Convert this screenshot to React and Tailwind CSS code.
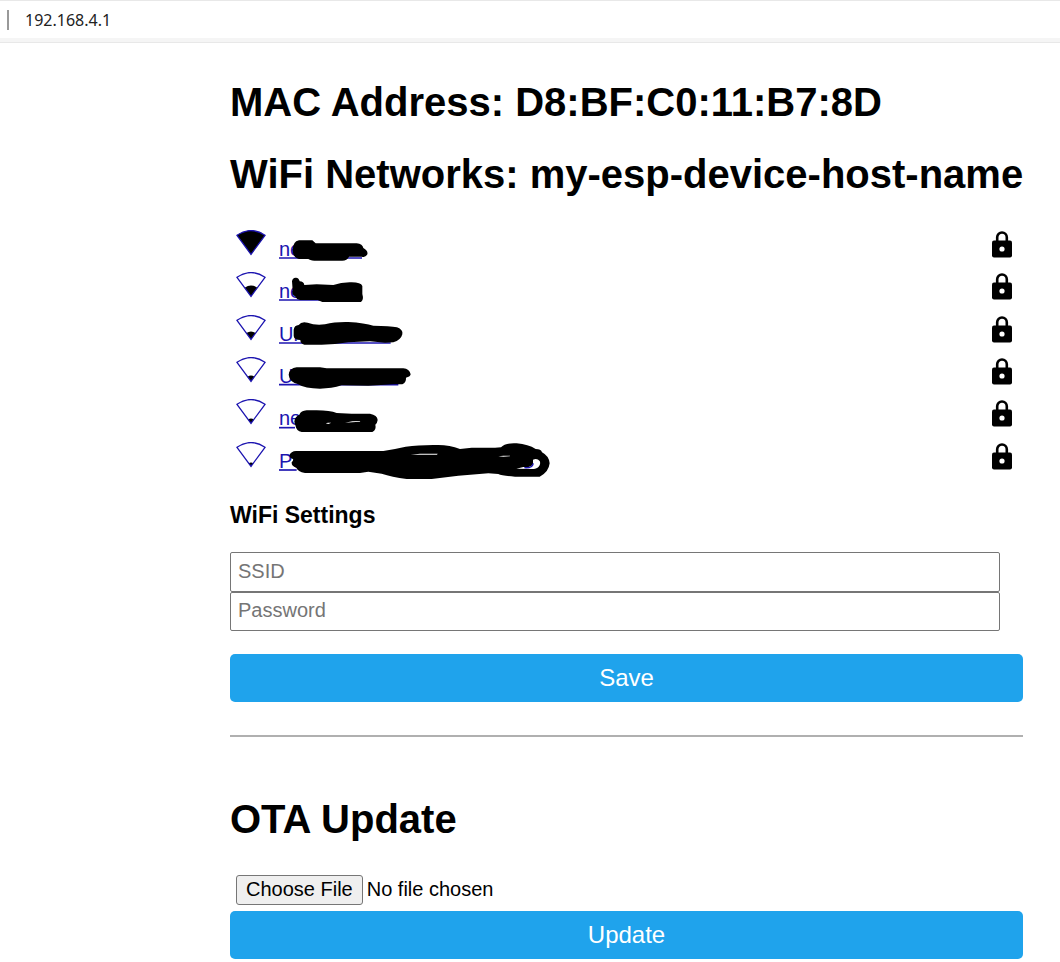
import React from "react";

const networks = [
  {
    name: "ne",
    signal: 24,
    viewBox: "15 12 1020 126",
    marks: "M203 92Q203 64 222 61H262L272 70H395Q413 72 415 84Q430 92 427 103Q422 114 410 110H372Q366 122 352 122H268Q254 121 250 117H222Q204 112 203 92Z",
    line: "M162 114H411",
  },
  {
    name: "ne",
    signal: 11,
    viewBox: "15 138 1020 126",
    marks: "M201 184Q203 172 213 173Q222 174 224 184Q236 184 238 195L275 193L325 195Q350 186 380 187Q408 187 412 198V222Q417 239 408 246H292L278 240H225Q214 238 210 229Q199 224 203 210Z",
    line: "M162 240H410",
  },
  {
    name: "Ur",
    signal: 8,
    viewBox: "15 12 1020 126",
    marks: "M206 74Q208 61 221 60Q229 48 248 53Q270 62 300 58Q330 50 370 51Q420 54 445 62Q495 63 516 67Q535 74 532 88Q528 105 505 112L480 113L435 109L370 112Q330 119 290 119H238Q226 116 226 105Q206 104 206 92Z",
    line: "M162 114H497",
  },
  {
    name: "Un",
    signal: 6,
    viewBox: "15 139 1020 126",
    marks: "M191 210Q193 191 215 188H285L305 191H535Q553 193 557 209Q555 217 543 219Q544 233 532 239H505L430 243L350 242Q320 252 285 252Q240 252 218 238Q193 231 191 210Z",
    line: "M162 240H520",
  },
  {
    name: "ne",
    signal: 5,
    viewBox: "15 10 1020 126",
    marks: "M208 96Q209 81 223 75Q228 63 245 62H275Q315 62 335 70L380 72H435Q457 76 458 91Q457 100 451 105Q455 120 442 127H230Q214 124 212 110Z M302 101L310 103L319 99L309 99Z M360 99L382 98L404 96L406 94L382 95Z",
    line: "M162 114H210",
  },
  {
    name: "Pe",
    signal: 4,
    viewBox: "15 138 1020 126",
    marks: "M194 195Q198 184 213 183H475L510 177L542 170Q585 164 640 165Q674 165 705 177L740 173H810L828 172Q840 158 875 160Q910 163 932 177Q948 177 951 187Q972 198 974 220Q971 247 944 260H870Q830 257 820 252L790 250L700 257L620 267H545Q500 261 470 251L430 245L405 249H240Q218 245 214 233Q199 229 200 217Q206 211 204 207Q193 205 194 195Z M557 194L585 191H638L636 194Z M820 199L835 197H856L854 199L835 200Z M874 236L895 231Q920 233 924 222V209Q936 203 944 213Q948 222 941 230Q935 237 920 237Z",
    line: "M162 240H215",
    over: "M898 233Q922 235 925 220",
  },
];

function SignalIcon({ level }) {
  const half = (level * 14) / 24;
  const edge = 24.5 - level * 0.8;
  return (
    <svg width="30" height="26" viewBox="0 0 30 26" aria-hidden="true">
      <path
        d={`M15 24.5L${15 - half} ${edge}Q15 ${edge - level * 0.4} ${15 + half} ${edge}Z`}
        fill="#000"
      />
      <path d="M15 24.3L1 5.3Q15-4.2 29 5.3Z" fill="none" stroke="#1c14b0" strokeWidth="1.3" />
    </svg>
  );
}

function LockIcon() {
  return (
    <svg width="20" height="27" viewBox="0 0 20 27" role="img" aria-label="Secured">
      <path d="M5.2 11V6.3a4.8 4.8 0 0 1 9.6 0V11" fill="none" stroke="#000" strokeWidth="2.6" />
      <rect y="9.5" width="20" height="17" rx="2" fill="#000" />
      <circle cx="10" cy="18" r="2.6" fill="#fff" />
    </svg>
  );
}

const heading = "text-[40px] leading-[46px] font-bold";
const action =
  "block h-12 w-full rounded-[5px] bg-[#1fa3ec] text-2xl text-white cursor-pointer";
const field =
  "block w-full rounded-[2px] border border-[#767676] px-[7px] pb-1 pt-0.5 text-xl placeholder:text-[#757575]";

export default function App() {
  return (
    <div className="min-h-screen bg-white font-['Liberation_Sans',Arial,sans-serif] text-black">
      <header className="flex h-[43px] items-center border-b border-t border-[#e8e8e8] bg-white pb-1 shadow-[inset_0_-4px_0_#f5f5f5]">
        <span className="ml-[7px] h-5 w-0.5 bg-[#999]" />
        <span className="ml-4 font-['Noto_Sans',sans-serif] text-base leading-5 text-[#222]">
          192.168.4.1
        </span>
      </header>

      <main className="pl-[230px] pr-[37px] pt-9">
        <h1 className={heading}>MAC Address: D8:BF:C0:11:B7:8D</h1>
        <h1 className={`${heading} mt-[26px] whitespace-nowrap`}>
          WiFi Networks: my-esp-device-host-name
        </h1>

        <ul className="mt-[27px] grid h-[254px] grid-rows-6">
          {networks.map((n, i) => (
            <li key={i} className="relative flex items-start justify-between pl-[6px] pr-[11px] pt-[6px]">
              <a href="#wifi" className="flex items-start gap-[13px] text-[#1c14b0]">
                <SignalIcon level={n.signal} />
                <span className="pt-[7px] text-xl leading-6">{n.name}</span>
              </a>
              <svg
                className="pointer-events-none absolute left-0 top-0 overflow-visible"
                width="340"
                height="42"
                viewBox={n.viewBox}
                aria-hidden="true"
              >
                <path d={n.line} fill="none" stroke="#1c14b0" strokeWidth="5" />
                <path d={n.marks} fillRule="evenodd" fill="#000" />
                {n.over && <path d={n.over} fill="none" stroke="#1c14b0" strokeWidth="4" />}
              </svg>
              <span className="pt-px">
                <LockIcon />
              </span>
            </li>
          ))}
        </ul>

        <form id="wifi" onSubmit={(e) => e.preventDefault()}>
          <h2 className="mt-[23px] text-[23px] font-bold leading-7">WiFi Settings</h2>
          <div className="mt-[23px] pr-[23px]">
            <input className={`${field} h-10`} type="text" placeholder="SSID" aria-label="SSID" />
            <input className={`${field} h-[39px]`} type="password" placeholder="Password" aria-label="Password" />
          </div>
          <button type="submit" className={`${action} mt-[23px]`}>
            Save
          </button>
        </form>

        <hr className="mt-[33px] border-t-2 border-[#b0b0b0]" />

        <form onSubmit={(e) => e.preventDefault()}>
          <h1 className={`${heading} mt-[59px]`}>OTA Update</h1>
          <input
            type="file"
            aria-label="Firmware file"
            className="ml-[6px] mt-[33px] block h-[30px] text-xl leading-6 file:mr-1 file:h-[30px] file:rounded-[3px] file:border file:border-solid file:border-[#767676] file:bg-[#efefef] file:px-[9px] file:pb-[3px] file:text-xl file:leading-6 file:text-black"
          />
          <button type="submit" className={`${action} mt-[6px]`}>
            Update
          </button>
        </form>
      </main>
    </div>
  );
}
